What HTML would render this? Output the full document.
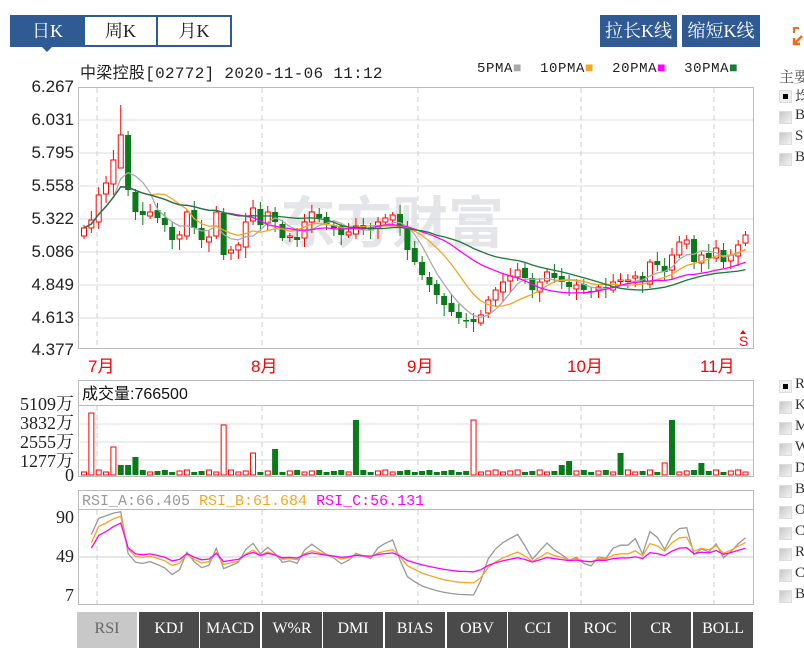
<!DOCTYPE html>
<html><head><meta charset="utf-8"><style>
*{margin:0;padding:0;box-sizing:border-box}
body{width:804px;height:657px;overflow:hidden;background:#fff;position:relative;font-family:"Liberation Serif","Noto Serif CJK SC",serif}
.a{position:absolute}
.tab{position:absolute;top:15px;height:32px;border:2px solid #2f5a94;font-size:18px;line-height:28px;text-align:center;color:#222}
.btn{position:absolute;top:15px;height:32px;background:#2f5a94;color:#fff;font-size:18px;line-height:32px;text-align:center}
.yl{position:absolute;right:730px;font-family:"Liberation Sans",sans-serif;font-size:17px;color:#222;text-align:right;white-space:nowrap}
.cb{position:absolute;left:779px;width:13px;height:13px;background:linear-gradient(135deg,#c8c8c8,#f4f4f4);border:1px solid #ddd}
.cl{position:absolute;left:795px;font-size:15px;color:#333;white-space:nowrap}
.it{position:absolute;top:612px;height:36px;width:60px;background:#4a4a4a;color:#fff;font-size:16px;line-height:34px;text-align:center;font-family:"Liberation Serif",serif}
</style></head><body>
<div class="tab" style="left:10px;width:75px;background:#2f5a94;color:#fff">日K</div>
<div class="a" style="left:42px;top:47px;width:0;height:0;border-left:5px solid transparent;border-right:5px solid transparent;border-top:5px solid #2f5a94"></div>
<div class="tab" style="left:83px;width:75px">周K</div>
<div class="tab" style="left:156px;width:76px">月K</div>
<div class="btn" style="left:600px;width:77px">拉长K线</div>
<div class="btn" style="left:682px;width:78px">缩短K线</div>
<svg class="a" style="left:790px;top:24px" width="14" height="22"><path d="M3 3h6v2H5v4H3z" fill="#f26a1b"/><path d="M12 12 L5 19 M4 14v6h6" stroke="#f26a1b" stroke-width="2.5" fill="none"/></svg>
<div class="a" style="left:80px;top:59px;font-size:16px;color:#222;white-space:nowrap;font-family:'Liberation Mono','Noto Sans CJK SC',monospace;letter-spacing:0.3px">中梁控股[02772] 2020-11-06 11:12</div>
<div class="a" style="left:477px;top:61px;font-size:14px;color:#222;white-space:nowrap;font-family:'Liberation Mono',monospace;letter-spacing:0.6px">5PMA<span style="color:#aaa">■</span>&nbsp; 10PMA<span style="color:#f5a623">■</span>&nbsp; 20PMA<span style="color:#f0f">■</span>&nbsp; 30PMA<span style="color:#1a7a3a">■</span></div>
<div class="a" style="left:779px;top:66px;font-size:15px;color:#555;white-space:nowrap">主要</div>
<div class="cb" style="top:90px;background:#eee"><div style="margin:3px;width:5px;height:5px;background:#000"></div></div><div class="cl" style="top:86px">均</div>
<div class="cb" style="top:111px"></div><div class="cl" style="top:107px">B</div>
<div class="cb" style="top:132px"></div><div class="cl" style="top:128px">S</div>
<div class="cb" style="top:153px"></div><div class="cl" style="top:149px">B</div>
<div id="low"></div>
<div class="yl" style="top:77px">6.267</div><div class="yl" style="top:110px">6.031</div><div class="yl" style="top:143px">5.795</div><div class="yl" style="top:176px">5.558</div><div class="yl" style="top:209px">5.322</div><div class="yl" style="top:242px">5.086</div><div class="yl" style="top:275px">4.849</div><div class="yl" style="top:308px">4.613</div><div class="yl" style="top:340px">4.377</div>
<div class="yl" style="top:390px;font-family:'Liberation Serif','Noto Serif CJK SC',serif;font-size:18px">5109万</div>
<div class="yl" style="top:409px;font-family:'Liberation Serif','Noto Serif CJK SC',serif;font-size:18px">3832万</div>
<div class="yl" style="top:428px;font-family:'Liberation Serif','Noto Serif CJK SC',serif;font-size:18px">2555万</div>
<div class="yl" style="top:447px;font-family:'Liberation Serif','Noto Serif CJK SC',serif;font-size:18px">1277万</div>
<div class="yl" style="top:465px;font-family:'Liberation Serif',serif;font-size:18px">0</div>
<div class="yl" style="top:507px;font-family:'Liberation Serif',serif;font-size:18px">90</div>
<div class="yl" style="top:546px;font-family:'Liberation Serif',serif;font-size:18px">49</div>
<div class="yl" style="top:585px;font-family:'Liberation Serif',serif;font-size:18px">7</div>
<svg id="s" class="a" style="left:0;top:0" width="804" height="657" font-family="Liberation Sans, Noto Sans CJK SC, sans-serif">
<text x="280" y="243" font-size="56" font-weight="bold" fill="#e4e5e9" font-family="Noto Sans CJK SC, sans-serif">东方财富</text>
<rect x="78.5" y="87.5" width="675" height="261" fill="none" stroke="#bbb"/>
<g stroke="#ddd"><line x1="78" x2="753" y1="120" y2="120"/><line x1="78" x2="753" y1="153" y2="153"/><line x1="78" x2="753" y1="186" y2="186"/><line x1="78" x2="753" y1="219" y2="219"/><line x1="78" x2="753" y1="252" y2="252"/><line x1="78" x2="753" y1="285" y2="285"/><line x1="78" x2="753" y1="318" y2="318"/></g>
<rect x="78.5" y="380.5" width="675" height="96" fill="none" stroke="#bbb"/><line x1="78" x2="753" y1="405.5" y2="405.5" stroke="#bbb"/>
<g stroke="#ddd"><line x1="78" x2="753" y1="424" y2="424"/><line x1="78" x2="753" y1="442" y2="442"/><line x1="78" x2="753" y1="460" y2="460"/></g>
<rect x="78.5" y="490.5" width="675" height="114" fill="none" stroke="#bbb"/><line x1="78" x2="753" y1="509.5" y2="509.5" stroke="#bbb"/>
<line x1="78" x2="753" y1="557" y2="557" stroke="#ccc"/>
<g stroke="#ccc" stroke-dasharray="5,4"><line x1="97" x2="97" y1="88" y2="348"/><line x1="262" x2="262" y1="88" y2="348"/><line x1="418" x2="418" y1="88" y2="348"/><line x1="581" x2="581" y1="88" y2="348"/><line x1="714" x2="714" y1="88" y2="348"/>
<line x1="97" x2="97" y1="406" y2="476"/><line x1="262" x2="262" y1="406" y2="476"/><line x1="418" x2="418" y1="406" y2="476"/><line x1="581" x2="581" y1="406" y2="476"/><line x1="714" x2="714" y1="406" y2="476"/>
<line x1="97" x2="97" y1="510" y2="604"/><line x1="262" x2="262" y1="510" y2="604"/><line x1="418" x2="418" y1="510" y2="604"/><line x1="581" x2="581" y1="510" y2="604"/><line x1="714" x2="714" y1="510" y2="604"/></g>
<g fill="#f00" font-size="17"><text x="88" y="372">7月</text><text x="251" y="372">8月</text><text x="407" y="372">9月</text><text x="567" y="372">10月</text><text x="700" y="372">11月</text><text x="739" y="346" font-size="14">S</text></g>
<path d="M743 330l-3 4h6z" fill="#f00"/>
<text x="82" y="399" font-size="16" fill="#111" font-family="Liberation Sans, Noto Sans CJK SC, sans-serif">成交量:766500</text>
<text x="82" y="505" font-size="15" font-family="Liberation Mono, monospace"><tspan fill="#999">RSI_A:66.405 </tspan><tspan fill="#f5a623">RSI_B:61.684 </tspan><tspan fill="#f0f">RSI_C:56.131</tspan></text>
<g id="g"></g>
</svg>
<div class="it" style="left:77px;background:#c8c8c8;color:#666">RSI</div>
<div class="it" style="left:139px">KDJ</div>
<div class="it" style="left:200px">MACD</div>
<div class="it" style="left:262px">W%R</div>
<div class="it" style="left:323px">DMI</div>
<div class="it" style="left:385px">BIAS</div>
<div class="it" style="left:447px">OBV</div>
<div class="it" style="left:508px">CCI</div>
<div class="it" style="left:570px">ROC</div>
<div class="it" style="left:631px">CR</div>
<div class="it" style="left:693px">BOLL</div>
<script>
var L=document.getElementById('low'),h='',ls='RKMWDBOCRCB';
for(var i=0;i<11;i++){var t=378+i*21;h+='<div class="cb" style="top:'+(t+2)+'px'+(i==0?';background:#eee':'')+'">'+(i==0?'<div style="margin:3px;width:5px;height:5px;background:#000"></div>':'')+'</div><div class="cl" style="top:'+(t-2)+'px">'+ls[i]+'</div>';}
L.innerHTML=h;
var c=[228,220,195,183,160,135,190,212,215,212,218,225,240,235,212,228,240,237,212,255,250,245,222,208,225,212,222,238,236,240,222,212,218,224,228,235,232,226,228,230,222,218,215,228,250,262,275,285,295,305,312,318,320,322,315,300,290,282,276,270,278,290,282,272,278,282,287,285,290,292,287,288,282,280,280,276,282,262,265,272,255,242,240,262,255,258,248,262,255,245,235];
var vol={1:62,4:28,5:10,6:10,7:18,19:50,23:22,26:26,37:55,53:55,65:10,66:14,73:22,79:12,80:55,84:12};
var vc={1:1,4:1,5:0,6:0,7:0,19:1,23:1,26:0,37:0,53:1,65:0,66:0,73:0,79:1,80:0,84:0};
var s='',n=c.length,X=function(i){return 84+i*7.35};
for(var i=0;i<n;i++){var o=i?c[i-1]+((i*7)%5-2):c[0]+8,cl=c[i];var up=cl<o;var col=up?'#f00':'#0a7a1a';var hi=Math.min(o,cl)-3-(i*13)%7,lo=Math.max(o,cl)+3+(i*11)%9;if(i==5){hi=105;o=168}if(i==4)hi=150;
var x=X(i);s+='<line x1="'+x+'" x2="'+x+'" y1="'+hi+'" y2="'+lo+'" stroke="'+col+'"/>';var t=Math.min(o,cl),b=Math.max(Math.abs(o-cl),1.5);
s+=up?'<rect x="'+(x-2.5)+'" y="'+t+'" width="5" height="'+b+'" fill="#fff" stroke="#f00"/>':'<rect x="'+(x-3)+'" y="'+t+'" width="6" height="'+b+'" fill="#0a7a1a"/>';
var vh=vol[i]||(3+(i%3));var vu=(i in vc)?vc[i]==1:up;s+=vu?'<rect x="'+(x-2.5)+'" y="'+(475-vh)+'" width="5" height="'+vh+'" fill="#fff" stroke="#f00"/>':'<rect x="'+(x-3)+'" y="'+(475-vh)+'" width="6" height="'+vh+'" fill="#0a7a1a"/>';}
function ma(p,col){var pts=[];for(var i=0;i<n;i++){var a=0,k=0;for(var j=Math.max(0,i-p+1);j<=i;j++){a+=c[j];k++}pts.push(X(i)+','+(a/k).toFixed(1))}s+='<polyline points="'+pts.join(' ')+'" fill="none" stroke="'+col+'" stroke-width="1.3"/>'}
ma(5,'#aaa');ma(10,'#f5a623');ma(20,'#f0f');ma(30,'#1a7a3a');
function rsi(p,col){var pts=[],g=1,l=1;for(var i=1;i<n;i++){var d=c[i-1]-c[i];g=(g*(p-1)+Math.max(d,0))/p;l=(l*(p-1)+Math.max(-d,0))/p;var r=100*g/(g+l);pts.push(X(i)+','+(595-(r-7)*77/83).toFixed(1))}s+='<polyline points="'+pts.join(' ')+'" fill="none" stroke="'+col+'" stroke-width="1.3"/>'}
rsi(6,'#999');rsi(12,'#f5a623');rsi(24,'#f0f');
document.getElementById('g').innerHTML=s;
</script>
</body></html>
